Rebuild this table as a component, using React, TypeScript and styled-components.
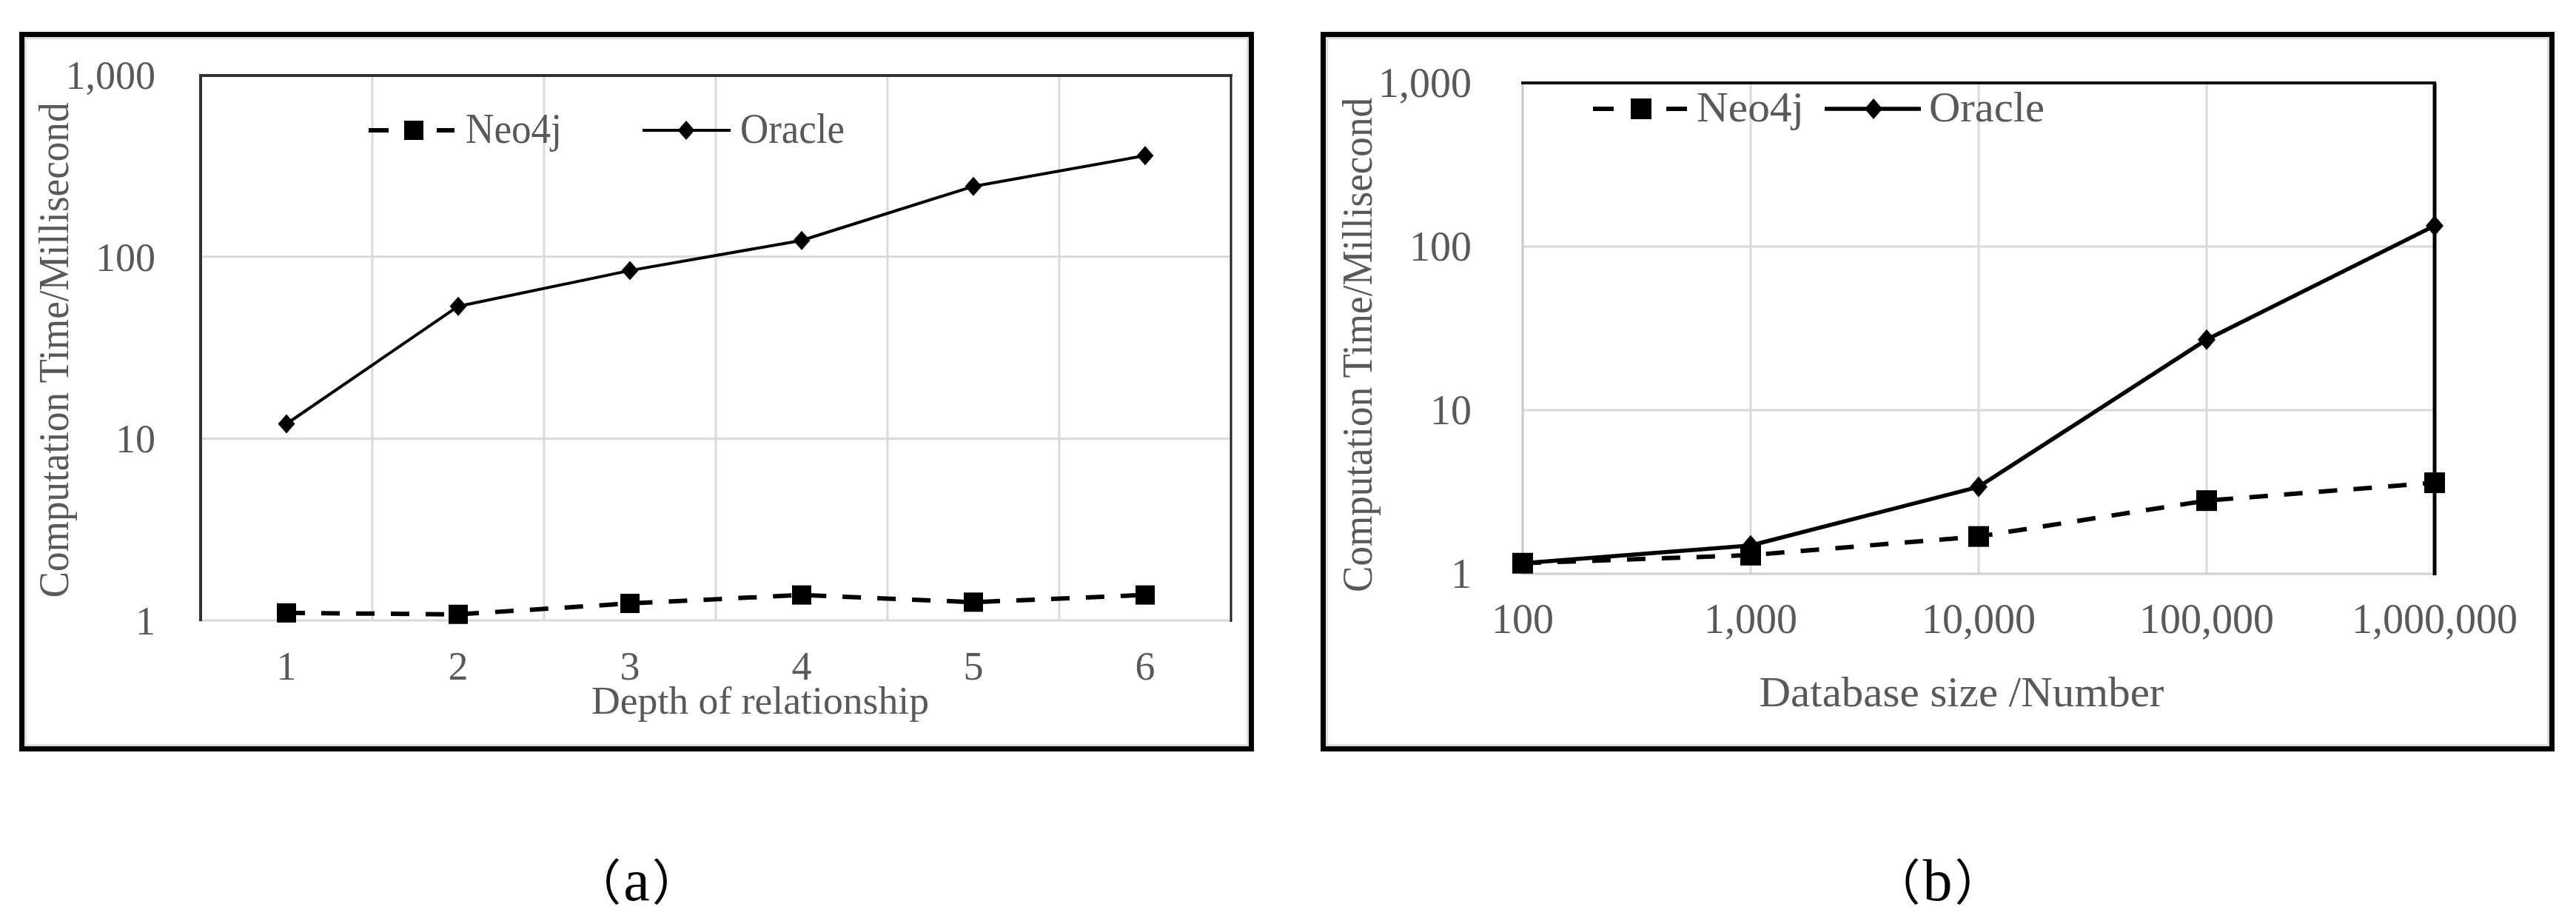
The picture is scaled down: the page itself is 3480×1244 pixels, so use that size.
import React from 'react'
import styled, { createGlobalStyle } from 'styled-components'

const GlobalStyle = createGlobalStyle`
  html, body {
    margin: 0;
    padding: 0;
    background: #ffffff;
  }
  body {
    font-family: 'Liberation Serif', 'Times New Roman', serif;
  }
`

const Page = styled.div`
  display: flex;
  gap: 90px;
  width: 3480px;
  height: 1244px;
  box-sizing: border-box;
  padding: 43px 0 0 26px;
  background: #ffffff;
`

const Figure = styled.div`
  display: flex;
  flex-direction: column;
  align-items: center;
`

const Frame = styled.div<{ $w: number }>`
  width: ${(p) => p.$w}px;
  height: 972px;
  box-sizing: border-box;
  border: 7px solid #000000;
  box-shadow: inset 0 0 0 3px #dddddd;
  background: #ffffff;
`

const Caption = styled.div`
  margin-top: 139px;
  font-family: 'Noto Sans CJK SC', sans-serif;
  font-size: 66px;
  line-height: 1;
  color: #000000;
`

const Letter = styled.span`
  font-family: 'Liberation Serif', 'Times New Roman', serif;
  font-size: 80px;
  line-height: 0;
  margin: 0 3px;
`

const Plot = styled.svg`
  display: block;
  width: 100%;
  height: 100%;
`

const Label = styled.text<{ $size: number }>`
  font-family: 'Liberation Serif', 'Times New Roman', serif;
  font-size: ${(p) => p.$size}px;
  fill: #595959;
`

const Grid = styled.line`
  stroke: #d9d9d9;
  stroke-width: 3px;
`

const Edge = styled.line<{ $w: number; $c: string }>`
  stroke: ${(p) => p.$c};
  stroke-width: ${(p) => p.$w}px;
`

const Series = styled.polyline<{ $w: number; $dash?: boolean }>`
  fill: none;
  stroke: #000000;
  stroke-width: ${(p) => p.$w}px;
  stroke-dasharray: ${(p) => (p.$dash ? '25 22' : 'none')};
  stroke-linejoin: round;
`

const Stroke = styled.line<{ $w: number }>`
  stroke: #000000;
  stroke-width: ${(p) => p.$w}px;
`

const Mark = styled.path`
  fill: #000000;
`

type EdgeStyle = { c: string; w: number }

type ChartConfig = {
  width: number
  plot: { l: number; t: number; r: number; b: number }
  decade: number
  xs: number[]
  xLabels: string[]
  xLabelY: number
  tickSize: number
  yLabelX: number
  yTitle: { x: number; y: number; len: number; size: number }
  xTitle: { text: string; x: number; y: number; len: number; size: number }
  vGrid: number[]
  edges: { top: EdgeStyle; left: EdgeStyle; right: EdgeStyle; bottom: EdgeStyle }
  oracle: number[]
  neo: number[]
  oracleW: number
  neoW: number
  sq: number
  dia: { w: number; h: number }
  legend: {
    y: number
    base: number
    size: number
    dash1: [number, number]
    sqX: number
    dash2: [number, number]
    neoText: { x: number; len: number }
    oLine: [number, number]
    diaX: number
    oText: { x: number; len: number }
  }
}

const square = (x: number, y: number, s: number) =>
  `M${x - s / 2} ${y - s / 2}h${s}v${s}h${-s}z`

const diamond = (x: number, y: number, w: number, h: number) =>
  `M${x} ${y - h / 2}L${x + w / 2} ${y}L${x} ${y + h / 2}L${x - w / 2} ${y}z`

const chartA: ChartConfig = {
  width: 1654,
  plot: { l: 238, t: 52, r: 1630, b: 788 },
  decade: 245.6,
  xs: [354, 586, 818, 1050, 1282, 1514],
  xLabels: ['1', '2', '3', '4', '5', '6'],
  xLabelY: 868,
  tickSize: 54,
  yLabelX: 177,
  yTitle: { x: 59, y: 423, len: 669, size: 58 },
  xTitle: { text: 'Depth of relationship', x: 994, y: 914, len: 456, size: 52 },
  vGrid: [470, 702, 934, 1166, 1398],
  edges: {
    top: { c: '#333333', w: 4 },
    left: { c: '#333333', w: 4 },
    right: { c: '#222222', w: 3 },
    bottom: { c: '#d9d9d9', w: 3 },
  },
  oracle: [12.05, 53.4, 84, 123, 244, 360],
  neo: [1.1, 1.08, 1.24, 1.38, 1.26, 1.38],
  oracleW: 4,
  neoW: 6,
  sq: 26,
  dia: { w: 23, h: 26 },
  legend: {
    y: 126,
    base: 143,
    size: 57,
    dash1: [465, 492],
    sqX: 526,
    dash2: [557, 581],
    neoText: { x: 596, len: 130 },
    oLine: [835, 954],
    diaX: 894,
    oText: { x: 967, len: 141 },
  },
}

const chartB: ChartConfig = {
  width: 1653,
  plot: { l: 266, t: 62, r: 1498, b: 725 },
  decade: 221,
  xs: [266, 574, 882, 1190, 1498],
  xLabels: ['100', '1,000', '10,000', '100,000', '1,000,000'],
  xLabelY: 805,
  tickSize: 56,
  yLabelX: 197,
  yTitle: { x: 62, y: 416, len: 668, size: 58 },
  xTitle: { text: 'Database size /Number', x: 859, y: 904, len: 547, size: 56 },
  vGrid: [574, 882, 1190],
  edges: {
    top: { c: '#111111', w: 4 },
    left: { c: '#c8c8c8', w: 3 },
    right: { c: '#000000', w: 5 },
    bottom: { c: '#d0d0d0', w: 3 },
  },
  oracle: [1.16, 1.49, 3.4, 27, 134],
  neo: [1.16, 1.3, 1.69, 2.8, 3.6],
  oracleW: 5.5,
  neoW: 6,
  sq: 28,
  dia: { w: 24, h: 28 },
  legend: {
    y: 97,
    base: 114,
    size: 56,
    dash1: [361, 389],
    sqX: 426,
    dash2: [460, 488],
    neoText: { x: 501, len: 145 },
    oLine: [674, 804],
    diaX: 740,
    oText: { x: 815, len: 156 },
  },
}

const Chart = ({ c }: { c: ChartConfig }) => {
  const { l, t, r, b } = c.plot
  const y = (v: number) => b - c.decade * Math.log10(v)
  const pts = (vals: number[]) => vals.map((v, i) => `${c.xs[i]},${y(v)}`).join(' ')
  const lg = c.legend

  return (
    <Plot viewBox={`0 0 ${c.width} 958`}>
      {[10, 100].map((v) => (
        <Grid key={v} x1={l} x2={r} y1={y(v)} y2={y(v)} />
      ))}
      {c.vGrid.map((x) => (
        <Grid key={x} x1={x} x2={x} y1={t} y2={b} />
      ))}
      <Edge x1={l} x2={r} y1={b} y2={b} $c={c.edges.bottom.c} $w={c.edges.bottom.w} />
      <Edge x1={l} x2={l} y1={t} y2={b + 1} $c={c.edges.left.c} $w={c.edges.left.w} />
      <Edge x1={r} x2={r} y1={t} y2={b + 2} $c={c.edges.right.c} $w={c.edges.right.w} />
      <Edge x1={l - 2} x2={r + 2} y1={t} y2={t} $c={c.edges.top.c} $w={c.edges.top.w} />

      {[1, 10, 100, 1000].map((v) => (
        <Label key={v} x={c.yLabelX} y={y(v) + 19} textAnchor="end" $size={c.tickSize}>
          {v === 1000 ? '1,000' : String(v)}
        </Label>
      ))}
      {c.xLabels.map((s, i) => (
        <Label key={s} x={c.xs[i]} y={c.xLabelY} textAnchor="middle" $size={c.tickSize}>
          {s}
        </Label>
      ))}
      <Label
        x={c.xTitle.x}
        y={c.xTitle.y}
        textAnchor="middle"
        textLength={c.xTitle.len}
        lengthAdjust="spacingAndGlyphs"
        $size={c.xTitle.size}
      >
        {c.xTitle.text}
      </Label>
      <Label
        transform={`translate(${c.yTitle.x} ${c.yTitle.y}) rotate(-90)`}
        textAnchor="middle"
        textLength={c.yTitle.len}
        lengthAdjust="spacingAndGlyphs"
        $size={c.yTitle.size}
      >
        Computation Time/Millisecond
      </Label>

      <Series points={pts(c.oracle)} $w={c.oracleW} />
      {c.oracle.map((v, i) => (
        <Mark key={i} d={diamond(c.xs[i], y(v), c.dia.w, c.dia.h)} />
      ))}
      <Series points={pts(c.neo)} $w={c.neoW} $dash />
      {c.neo.map((v, i) => (
        <Mark key={i} d={square(c.xs[i], y(v), c.sq)} />
      ))}

      {/* legend */}
      <Stroke x1={lg.dash1[0]} x2={lg.dash1[1]} y1={lg.y} y2={lg.y} $w={c.neoW} />
      <Mark d={square(lg.sqX, lg.y, c.sq)} />
      <Stroke x1={lg.dash2[0]} x2={lg.dash2[1]} y1={lg.y} y2={lg.y} $w={c.neoW} />
      <Label x={lg.neoText.x} y={lg.base} textLength={lg.neoText.len} lengthAdjust="spacingAndGlyphs" $size={lg.size}>
        Neo4j
      </Label>
      <Stroke x1={lg.oLine[0]} x2={lg.oLine[1]} y1={lg.y} y2={lg.y} $w={c.oracleW} />
      <Mark d={diamond(lg.diaX, lg.y, c.dia.w, c.dia.h)} />
      <Label x={lg.oText.x} y={lg.base} textLength={lg.oText.len} lengthAdjust="spacingAndGlyphs" $size={lg.size}>
        Oracle
      </Label>
    </Plot>
  )
}

export default function App() {
  return (
    <>
      <GlobalStyle />
      <Page>
        <Figure>
          <Frame $w={1668}>
            <Chart c={chartA} />
          </Frame>
          <Caption>
            （<Letter>a</Letter>）
          </Caption>
        </Figure>
        <Figure>
          <Frame $w={1667}>
            <Chart c={chartB} />
          </Frame>
          <Caption>
            （<Letter>b</Letter>）
          </Caption>
        </Figure>
      </Page>
    </>
  )
}
